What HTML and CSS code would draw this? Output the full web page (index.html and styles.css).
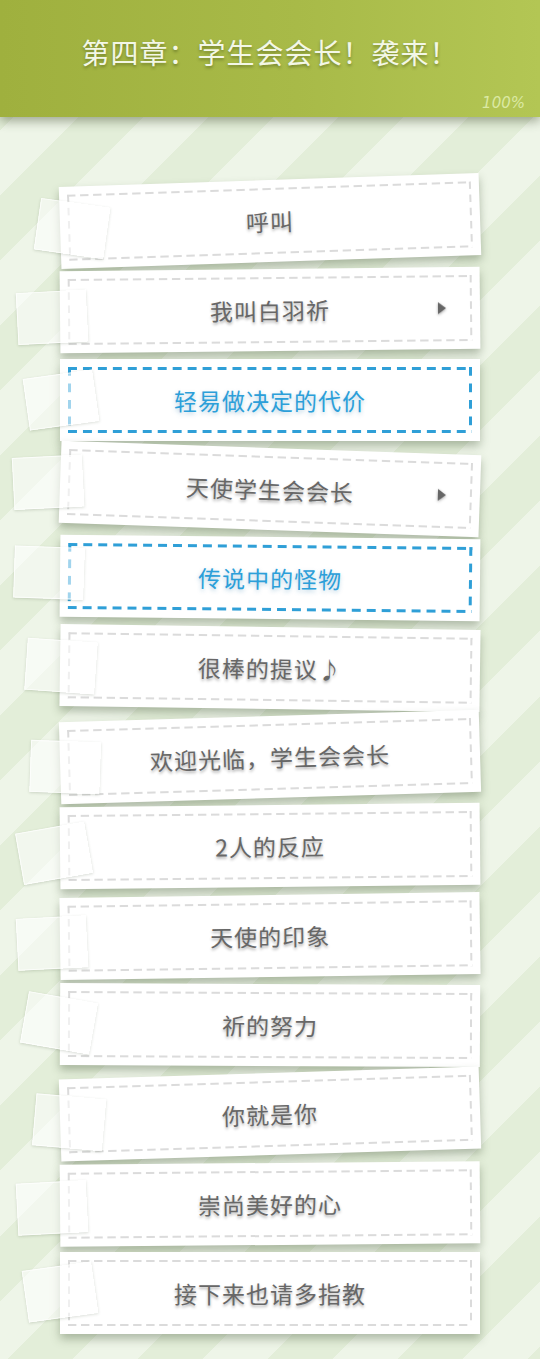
FILE: index.html
```html
<!DOCTYPE html>
<html lang="zh-CN">
<head>
<meta charset="utf-8">
<title>第四章：学生会会长！袭来！</title>
<link rel="stylesheet" href="styles.css">
</head>
<body>
<header class="topbar">
  <h1 class="chapter-title">第四章：学生会会长！袭来！</h1>
  <span class="progress">100%</span>
</header>

<main class="episodes">
  <div class="episode tilt-1">
    <div class="frame"><span class="label">呼叫</span></div>
    <span class="note note-1"></span>
  </div>
  <div class="episode tilt-2">
    <div class="frame"><span class="label">我叫白羽祈</span><span class="more"></span></div>
    <span class="note note-2"></span>
  </div>
  <div class="episode tilt-3 current">
    <div class="frame"><span class="label">轻易做决定的代价</span></div>
    <span class="note note-3"></span>
  </div>
  <div class="episode tilt-4">
    <div class="frame"><span class="label">天使学生会会长</span><span class="more"></span></div>
    <span class="note note-4"></span>
  </div>
  <div class="episode tilt-5 current">
    <div class="frame"><span class="label">传说中的怪物</span></div>
    <span class="note note-5"></span>
  </div>
  <div class="episode tilt-6">
    <div class="frame"><span class="label">很棒的提议♪</span></div>
    <span class="note note-6"></span>
  </div>
  <div class="episode tilt-7">
    <div class="frame"><span class="label">欢迎光临，学生会会长</span></div>
    <span class="note note-7"></span>
  </div>
  <div class="episode tilt-8">
    <div class="frame"><span class="label">2人的反应</span></div>
    <span class="note note-8"></span>
  </div>
  <div class="episode tilt-9">
    <div class="frame"><span class="label">天使的印象</span></div>
    <span class="note note-9"></span>
  </div>
  <div class="episode tilt-10">
    <div class="frame"><span class="label">祈的努力</span></div>
    <span class="note note-10"></span>
  </div>
  <div class="episode tilt-11">
    <div class="frame"><span class="label">你就是你</span></div>
    <span class="note note-11"></span>
  </div>
  <div class="episode tilt-12">
    <div class="frame"><span class="label">崇尚美好的心</span></div>
    <span class="note note-12"></span>
  </div>
  <div class="episode tilt-13">
    <div class="frame"><span class="label">接下来也请多指教</span></div>
    <span class="note note-13"></span>
  </div>
</main>
</body>
</html>
```

FILE: styles.css
```css
* {
  box-sizing: border-box;
}

html,
body {
  margin: 0;
  padding: 0;
}

body {
  width: 540px;
  height: 1359px;
  overflow: hidden;
  font-family: "Noto Sans CJK SC", "Noto Sans", sans-serif;
  background-color: #e9f2e1;
  background-image: repeating-linear-gradient(
    135deg,
    #eef5e8 0px,
    #eef5e8 46px,
    #e3eed9 46px,
    #e3eed9 92px
  );
}

/* ---------- top bar ---------- */
.topbar {
  position: relative;
  z-index: 2;
  height: 117px;
  display: flex;
  flex-direction: column;
  align-items: center;
  background: linear-gradient(90deg, #9fb03e 0%, #a8ba48 55%, #b3c654 100%);
  box-shadow: 0 4px 10px rgba(60, 70, 40, 0.45);
}

.chapter-title {
  margin: 32px 0 0;
  font-size: 28px;
  line-height: 40px;
  font-weight: 400;
  color: #f3f7e6;
  text-shadow: 0 2px 3px rgba(60, 70, 20, 0.45);
  letter-spacing: 1px;
}

.progress {
  align-self: flex-end;
  margin: 22px 15px 0 0;
  font-family: "DejaVu Sans", sans-serif;
  font-size: 15px;
  line-height: 18px;
  font-style: italic;
  letter-spacing: 0;
  color: #dbe9a3;
}

/* ---------- episode list ---------- */
.episodes {
  display: flex;
  flex-direction: column;
  gap: 7.33px;
  padding: 63px 60px 0;
}

.episode {
  position: relative;
  height: 82px;
  padding: 8px;
  background: #ffffff;
  box-shadow: 0 5px 9px rgba(70, 90, 60, 0.38);
}

/* stitched frame: dashes drawn as repeating tiles on each edge */
.frame {
  --dash: #dbdbdb;
  --w: 2px;
  --tile: 13px;
  --len: 8px;
  height: 100%;
  display: grid;
  grid-template-columns: 1fr auto 1fr;
  align-items: center;
  background:
    linear-gradient(90deg, var(--dash) var(--len), transparent var(--len)) top left / var(--tile) var(--w) round no-repeat,
    linear-gradient(90deg, var(--dash) var(--len), transparent var(--len)) bottom left / var(--tile) var(--w) round no-repeat,
    linear-gradient(180deg, var(--dash) var(--len), transparent var(--len)) top left / var(--w) var(--tile) no-repeat round,
    linear-gradient(180deg, var(--dash) var(--len), transparent var(--len)) top right / var(--w) var(--tile) no-repeat round;
  background-repeat: round no-repeat, round no-repeat, no-repeat round, no-repeat round;
}

.label {
  grid-column: 2;
  font-size: 23px;
  line-height: 30px;
  font-weight: 400;
  color: #676767;
  letter-spacing: 1px;
  text-shadow: 0 2px 3px rgba(0, 0, 0, 0.32);
  white-space: nowrap;
}

.more {
  grid-column: 3;
  justify-self: end;
  margin-right: 26px;
  width: 0;
  height: 0;
  border-left: 8px solid #666666;
  border-top: 6.5px solid transparent;
  border-bottom: 6.5px solid transparent;
  filter: drop-shadow(0 1px 1.5px rgba(0, 0, 0, 0.35));
}

.current .frame {
  --dash: #2f9fd7;
  --w: 3px;
  --tile: 15px;
  --len: 9px;
}

.current .label {
  color: #2c9fd9;
  text-shadow: 0 2px 4px rgba(40, 120, 170, 0.35);
}

/* paper slip pinned over the left end of each card */
.note {
  position: absolute;
  width: 70px;
  height: 52px;
  background: rgba(255, 255, 255, 0.55);
  border: 1px solid rgba(255, 255, 255, 0.7);
  box-shadow: 0 1px 3px rgba(60, 80, 50, 0.2);
}

/* card tilts */
.tilt-1 { transform: rotate(-1.9deg); }
.tilt-2 { transform: rotate(-0.6deg); }
.tilt-3 { transform: rotate(0deg); }
.tilt-4 { transform: rotate(2deg); }
.tilt-5 { transform: rotate(0.6deg); }
.tilt-6 { transform: rotate(0.8deg); }
.tilt-7 { transform: rotate(-1.7deg); }
.tilt-8 { transform: rotate(-0.6deg); }
.tilt-9 { transform: rotate(-0.8deg); }
.tilt-10 { transform: rotate(0.3deg); }
.tilt-11 { transform: rotate(-1.8deg); }
.tilt-12 { transform: rotate(-0.5deg); }
.tilt-13 { transform: rotate(0deg); }

/* slip placement per card */
.note-1 { left: -23px; top: 16px; transform: rotate(10deg); }
.note-2 { left: -43px; top: 20px; transform: rotate(-2.4deg); }
.note-3 { left: -34px; top: 15px; transform: rotate(-8deg); }
.note-4 { left: -47px; top: 16px; transform: rotate(-5deg); }
.note-5 { left: -46px; top: 12px; transform: rotate(1.4deg); }
.note-6 { left: -34px; top: 16px; transform: rotate(3.2deg); }
.note-7 { left: -30px; top: 19px; transform: rotate(3.7deg); }
.note-8 { left: -41px; top: 20px; transform: rotate(-9.4deg); }
.note-9 { left: -43px; top: 19px; transform: rotate(-2.2deg); }
.note-10 { left: -36px; top: 14px; transform: rotate(9.7deg); }
.note-11 { left: -26px; top: 17px; transform: rotate(6.8deg); }
.note-12 { left: -43px; top: 17px; transform: rotate(-2.5deg); }
.note-13 { left: -35px; top: 14px; transform: rotate(-8deg); }
```
